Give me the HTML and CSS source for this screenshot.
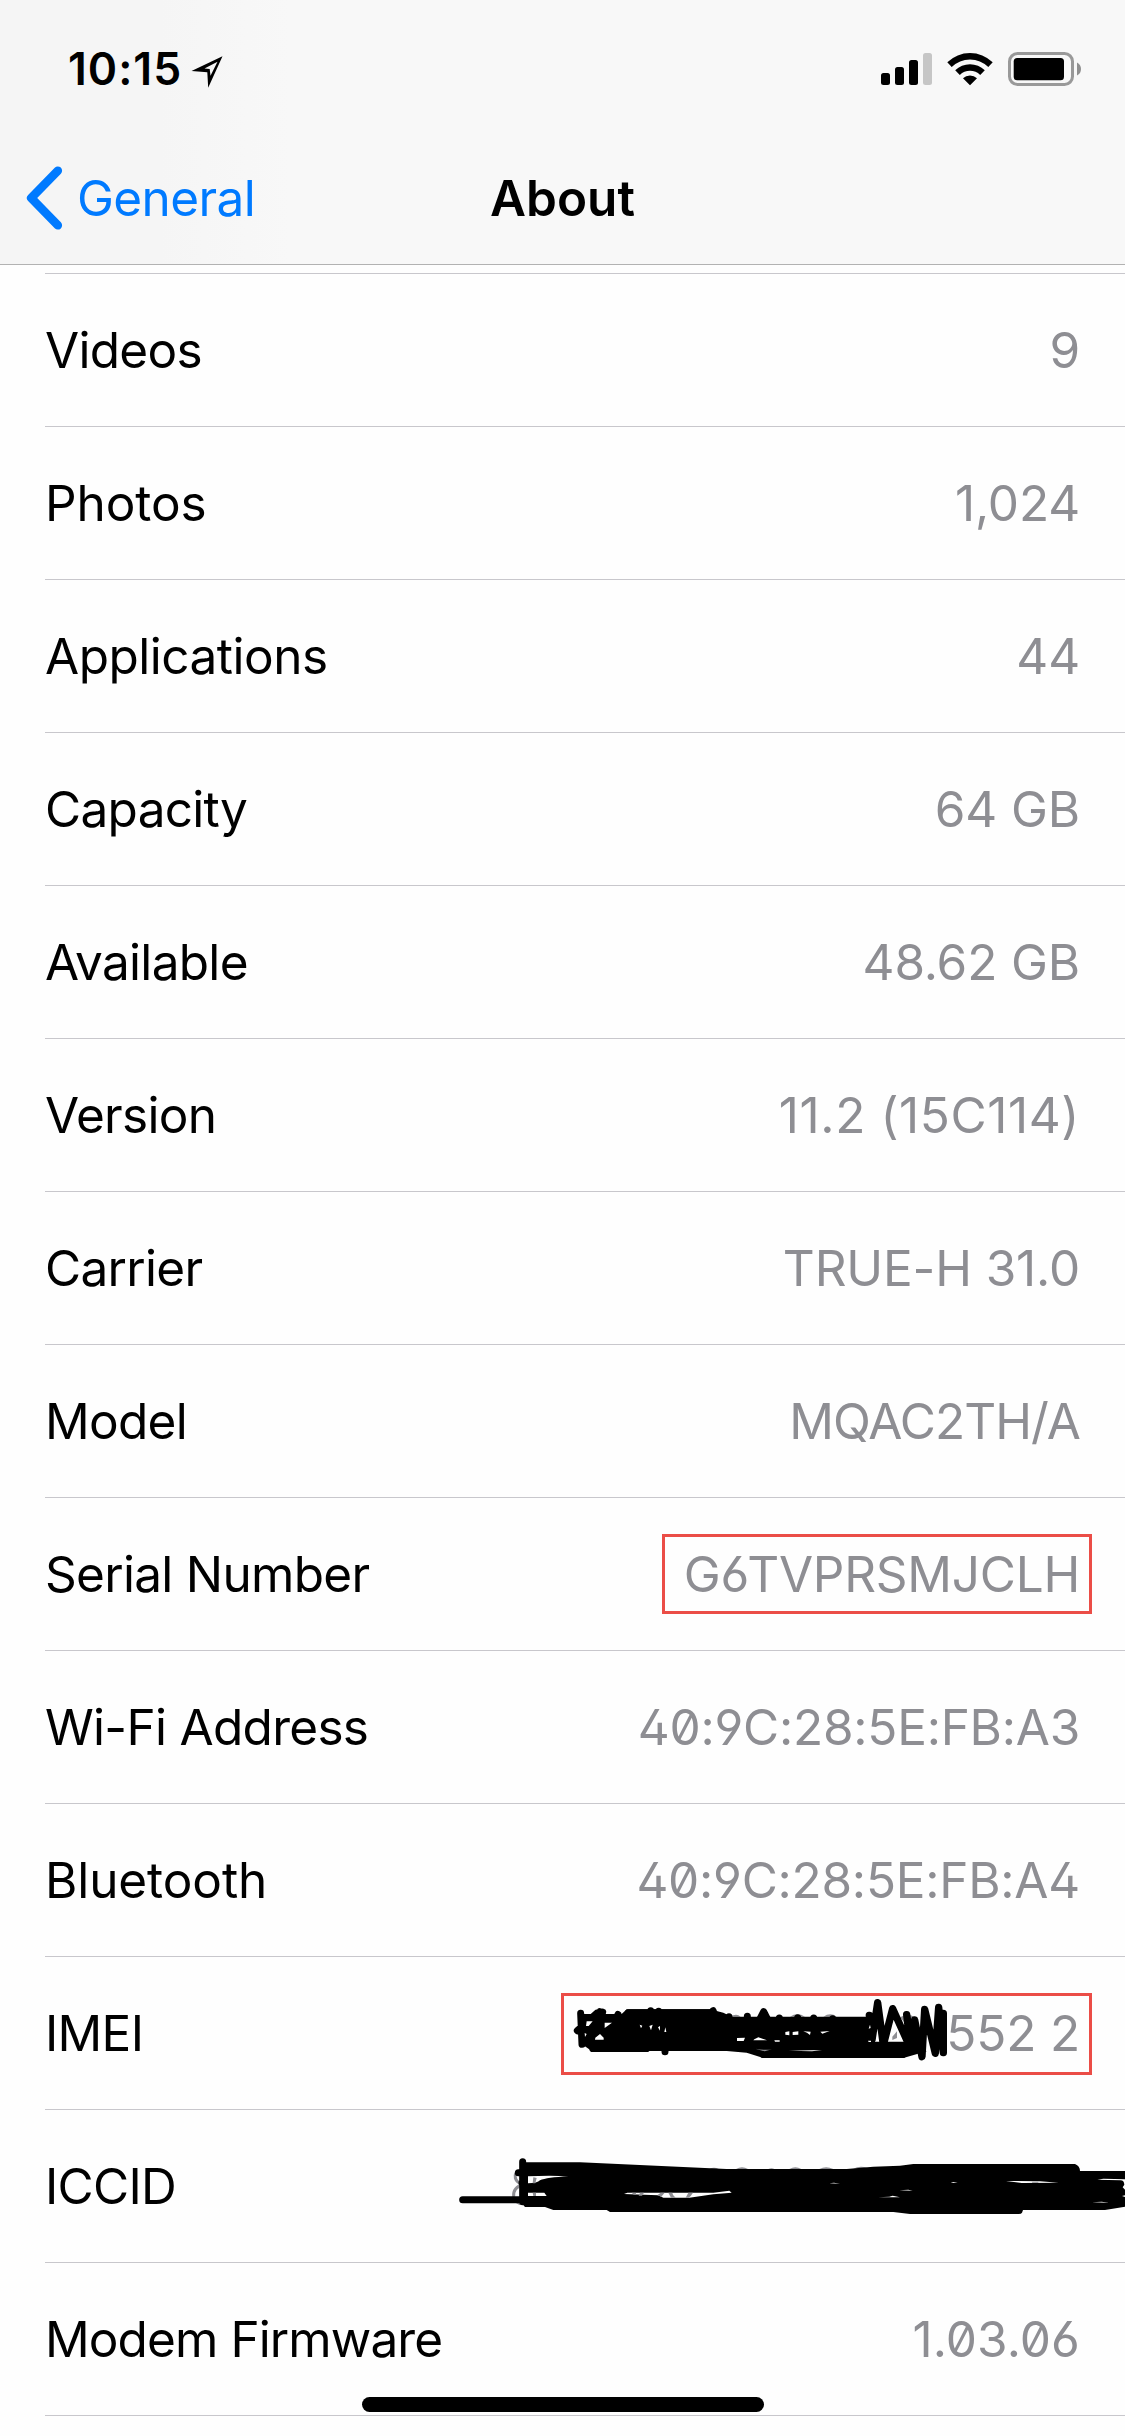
FILE: index.html
```
<!DOCTYPE html>
<html lang="en">
<head>
<meta charset="utf-8">
<title>About</title>
<link rel="stylesheet" href="styles.css">
</head>
<body>
<header class="header">
  <div class="status">
    <div class="status-left">
      <span class="time">10:15</span>
      <svg class="location" width="32" height="32" viewBox="0 0 32 32"><path fill-rule="evenodd" d="M31.5 .3 17.2 31.8 16.3 16.2 .5 15Z M26.5 5.7 13.5 12.4 18.7 13.1 19.5 19.8Z"/></svg>
    </div>
    <div class="status-right">
      <svg width="51" height="34" viewBox="0 0 51 34"><rect y="21" width="9" height="12" rx="2.5"/><rect x="14" y="15" width="9" height="18" rx="2.5"/><rect x="28" y="8" width="9" height="25" rx="2.5"/><rect x="42" y="1" width="9" height="32" rx="2.5" fill="#c6c6c6"/></svg>
      <svg class="wifi" width="46" height="34" viewBox="0 0 46 34"><path d="M.3 10.3A32.6 32.6 0 0 1 45.7 10.3L41.3 14.9A26.2 26.2 0 0 0 4.7 14.9Z M8.2 18.3A21.3 21.3 0 0 1 37.8 18.3L33.2 22.9A14.8 14.8 0 0 0 12.8 22.9Z M16 26.3A10 10 0 0 1 30 26.3L23 33.3Z"/></svg>
      <svg width="73" height="34" viewBox="0 0 73 34"><rect x="1.5" y="1.5" width="63" height="31" rx="8" fill="none" stroke="#999" stroke-width="3"/><rect x="5.7" y="6" width="50.3" height="22.3" rx="3.5"/><path d="M69 10.5Q73 12.5 73 17T69 23.5Z" fill="#909090"/></svg>
    </div>
  </div>
  <nav class="nav">
    <div class="back">
      <svg width="37" height="64" viewBox="0 0 37 64"><path d="M31.8 4.7 5.2 32 31.8 59.3" fill="none" stroke="#007aff" stroke-width="8.6" stroke-linecap="round" stroke-linejoin="round"/></svg>
      <span>General</span>
    </div>
    <h1 class="title">About</h1>
    <div></div>
  </nav>
</header>
<main class="list">
  <div class="row"><span class="label">Videos</span><span class="value">9</span></div>
  <div class="row"><span class="label loose">Photos</span><span class="value">1,024</span></div>
  <div class="row"><span class="label applications">Applications</span><span class="value">44</span></div>
  <div class="row"><span class="label">Capacity</span><span class="value">64 GB</span></div>
  <div class="row"><span class="label">Available</span><span class="value">48.62 GB</span></div>
  <div class="row"><span class="label">Version</span><span class="value version">11.2 (15C114)</span></div>
  <div class="row"><span class="label">Carrier</span><span class="value">TRUE-H 31.0</span></div>
  <div class="row"><span class="label">Model</span><span class="value model">MQAC2TH/A</span></div>
  <div class="row boxed"><span class="label">Serial Number</span><span class="value code frame serial">G6TVPRSMJCLH</span></div>
  <div class="row"><span class="label">Wi-Fi Address</span><span class="value code">40:9C:28:5E:FB:A3</span></div>
  <div class="row"><span class="label loose">Bluetooth</span><span class="value code">40:9C:28:5E:FB:A4</span></div>
  <div class="row boxed"><span class="label">IMEI</span><span class="value frame imei">552 2</span>
    <svg class="ink ink-imei" viewBox="0 0 1200 270">
      <path d="M510 80q20-12 32 0zM690 80q22-14 45 0zM790 80q22-14 40 0zM1020 82q22-14 42-2v16h-30z" fill="#8e8e93"/>
      <path d="M62 72H185L200 58H450L490 68 515 80H930L945 155H1060L1100 184 1030 204H610L560 188 500 183H95L62 160Z"/>
      <path d="M98 176H260M100 168H1000M610 194H1028" stroke-width="20"/>
      <path d="M62 70 66 163 M52 122 110 70 M85 160 120 65 M128 66 102 160 M174 73 140 150 M205 68 H450 M272 62v20 M296 64v20 M459 62l8 20 M315 185v-25 M507 80v10 M562 79v15 M598 90 611 65 624 90 M658 84v10 M713 83v10 M761 84v10 M818 86v10" stroke-width="21"/>
      <path d="M928 76 936 150 953 38 970 165 998 56 1052 176 1040 74 1056 178 1064 90 1086 200 1094 58 1126 190 1136 52 1150 188 1150 70" stroke-width="22"/>
      <path d="M80 94h18l-12 14-8 0zM74 129l6 3-5 9zM134 98h22l-22 16zM106 143l14-11 11 11v6h-26zM239 104l8 3-4 8zM268 108l10-4-5 17zM294 112l6-4v14zM316 112l3 14h-6zM531 144l24-1-4 10h-20zM583 148l12-6 26 9H580zM643 151h16v4h-14zM676 126l12-2v12l-12-2zM698 126l17-2v10l-17 1zM730 124l22 1-2 10-9-7zM781 125l28-2-22 8zM686 182l100-2-30 4zM924 152h9v4h-7zM930 104l2 10-6 2zM998 112l16 20-17 18z" class="paper"/>
      <path d="M586 176q30 6 50 2l-22 6zM997 140l14-16v20l-14 6z" fill="#8e8e93"/>
    </svg>
  </div>
  <div class="row boxed"><span class="label">ICCID</span>
    <svg class="ink ink-iccid" viewBox="0 0 2025 210">
      <path class="trace" d="M212 62q-20 6-16 22 4 14 22 18M222 102q-34 10-31 38 2 12 18 20M250 80v20M254 126v14"/>
      <path d="M778 57q14-8 28 0zM858 57q18-11 36 0zM955 57q10-5 18 0zM1018 57q18-11 36 0zM1108 57q20-11 42 0zM1210 56q20-10 42-2z" fill="#8e8e93"/>
      <path d="M218 37H390L830 57H1190L1270 50 1350 47 1390 42H1875Q1890 48 1890 63H2025V170L1965 180H1719L1716 188Q1714 192 1706 192H1380L1330 186H480L470 180H310L285 171H225L214 158Z"/>
      <path d="M38 149H300M218 35V155M205 68H240M216 98H250" stroke-width="21"/>
      <path d="M234 79Q300 75 355 79 290 82 270 91 262 100 234 100ZM234 128H283L290 138H234ZM522 132 532 128H790L838 122 845 128 790 133 718 143H640L625 136ZM1138 100 1152 98 1170 101ZM1285 142 1318 140 1328 137 1350 142ZM1348 121 1375 119 1388 122ZM1502 96 1523 97 1510 99ZM1668 93 1770 94 1826 98 1715 99ZM1926 157 1955 155 1977 158ZM1942 89 1960 86 2025 88V119L2018 112 2023 104Q2022 91 2012 91ZM2016 138 2025 136V141Z" class="paper"/>
      <path d="M250 82l10 2-4 16h-8zM248 128h10v10h-8zM545 128h12l2 6h-8zM570 128h12l-6 9h-10zM632 128h12l-10 12-12-4zM655 128h12q0 8 10 15h-14zM716 143q8-6 13-15h-14l-8 15zM1745 95h20v3h-18z" fill="#8e8e93"/>
    </svg>
  </div>
  <div class="row"><span class="label firmware">Modem Firmware</span><span class="value code modem">1.03.06</span></div>
  <div class="row last"></div>
</main>
<div class="home"></div>
</body>
</html>
```
FILE: styles.css
```
* { box-sizing: border-box; }

body {
  margin: 0;
  width: 1125px;
  height: 2436px;
  overflow: hidden;
  position: relative;
  background: #fefefe;
  color: #000;
  font: 400 49.5px/60px Inter, "Liberation Sans", sans-serif;
}

svg { display: block; }

.header {
  height: 265px;
  border-bottom: 1px solid #b2b2b2;
  background: linear-gradient(to right, #f5f5f5 0, #f5f5f5 160px, #f8f8f8 290px, #f8f8f8 100%);
}

.status {
  height: 132px;
  display: flex;
  justify-content: space-between;
  padding: 52px 44px 0 68px;
}

.status-left { display: flex; align-items: flex-start; }

.time {
  font-size: 44.5px;
  font-weight: 600;
  line-height: 35px;
  letter-spacing: 1px;
  width: 123px;
}

.location { margin-top: 4px; }

.status-right { display: flex; align-items: flex-start; }
.wifi { margin: 0 15px 0 15px; }

.nav {
  height: 132px;
  display: grid;
  grid-template-columns: 1fr auto 1fr;
  align-items: center;
}

.back {
  display: flex;
  align-items: center;
  gap: 14px;
  padding-left: 26px;
  color: #007aff;
  letter-spacing: -0.6px;
}

.title {
  margin: 0;
  font-size: 49.5px;
  font-weight: 600;
}

.list { padding: 8px 0 0 45px; }

.row {
  height: 153px;
  border-top: 1px solid #c8c7cc;
  padding-right: 45px;
  display: flex;
  align-items: center;
  justify-content: space-between;
}

.row.last { height: 21px; }

.label { letter-spacing: -0.7px; }
.label.loose { letter-spacing: -0.1px; }
.label.applications { letter-spacing: -0.5px; }
.label.firmware { letter-spacing: -0.9px; }

.value { color: #8e8e93; letter-spacing: -0.15px; }
.value.version { letter-spacing: 0.6px; }
.value.model { letter-spacing: -0.95px; }
.value.code {
  letter-spacing: -0.25px;
  font-feature-settings: "zero", "cv02", "cv03", "cv04";
}
.value.modem { letter-spacing: 0.1px; }

.boxed { position: relative; padding-right: 33px; }

.frame {
  display: flex;
  align-items: center;
  justify-content: flex-end;
  border: 3px solid #eb4d47;
  padding-right: 9px;
}
.frame.serial { width: 430px; height: 80px; }
.frame.imei { width: 531px; height: 82px; margin-top: 2px; padding-bottom: 2px; }

.ink {
  position: absolute;
  stroke: #000;
  stroke-width: 0;
  stroke-linecap: round;
  stroke-linejoin: round;
}
.ink path[stroke-width] { fill: none; }
.ink .paper { fill: #fefefe; }
.ink .trace { fill: none; stroke: #8e8e93; stroke-width: 9; }
.ink-imei { left: 515px; top: 33px; width: 400px; height: 90px; }
.ink-iccid { left: 405px; top: 40px; width: 675px; height: 70px; }

.home {
  position: absolute;
  left: 362px;
  top: 2397px;
  width: 402px;
  height: 15px;
  border-radius: 8px;
  background: #000;
}
```
